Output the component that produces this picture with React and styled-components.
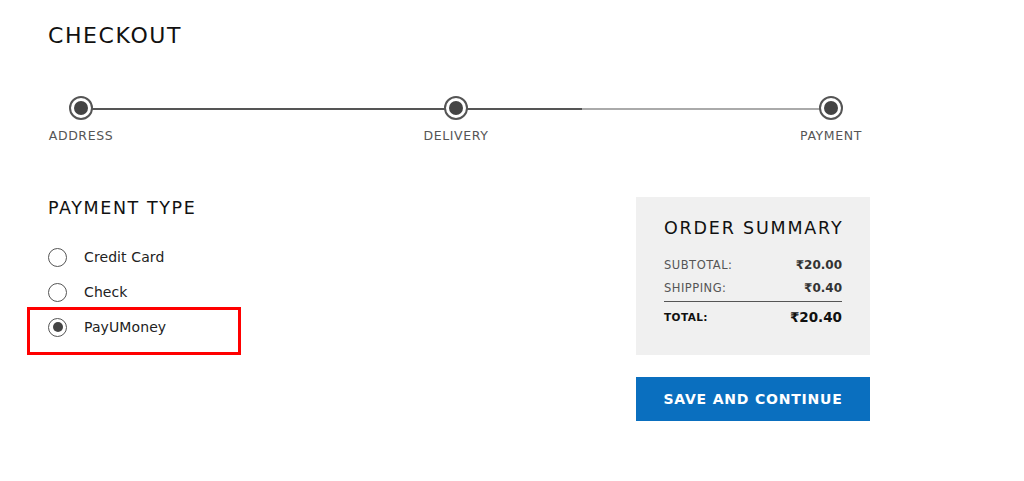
import React from 'react';
import styled, { createGlobalStyle } from 'styled-components';

const GlobalStyle = createGlobalStyle`
  body {
    margin: 0;
    background: #fff;
    font-family: "DejaVu Sans", "Noto Sans", sans-serif;
  }
`;

const Page = styled.div`
  width: 822px;
  padding: 22px 0 0 48px;
`;

const Title = styled.h1`
  margin: 0;
  font-size: 22px;
  font-weight: 400;
  letter-spacing: 1.6px;
  color: #111;
  line-height: 28px;
`;

const Stepper = styled.div`
  position: relative;
  width: 816px;
  margin-top: 46px;
  display: flex;
  justify-content: space-between;
`;

const Track = styled.div`
  position: absolute;
  top: 12px;
  left: 33px;
  right: 33px;
  height: 2px;
  background: linear-gradient(to right, #555 0%, #555 66.8%, #aaa 66.8%, #aaa 100%);
`;

const Step = styled.div`
  position: relative;
  width: 66px;
  display: flex;
  flex-direction: column;
  align-items: center;
`;

const StepDot = styled.div`
  width: 20px;
  height: 20px;
  border: 2px solid #555;
  border-radius: 50%;
  background: #fff;
  display: flex;
  align-items: center;
  justify-content: center;

  &::after {
    content: '';
    width: 14px;
    height: 14px;
    border-radius: 50%;
    background: #444;
  }
`;

const StepLabel = styled.div`
  margin-top: 8px;
  font-size: 12.5px;
  color: #555;
  white-space: nowrap;
  letter-spacing: 0.6px;
`;

const Main = styled.div`
  display: flex;
  justify-content: space-between;
  margin-top: 54px;
`;

const PaymentSection = styled.div``;

const SectionTitle = styled.h2`
  margin: 0 0 28px;
  font-size: 17.5px;
  font-weight: 400;
  letter-spacing: 1.6px;
  color: #111;
  line-height: 22px;
`;

const Options = styled.div`
  display: flex;
  flex-direction: column;
  gap: 15px;
`;

const Option = styled.label`
  position: relative;
  display: flex;
  align-items: center;
  gap: 17px;
  height: 20px;
  font-size: 14px;
  color: #222;
  letter-spacing: 0.1px;
`;

const Radio = styled.span`
  box-sizing: border-box;
  width: 19px;
  height: 19px;
  border: 1.5px solid #555;
  border-radius: 50%;
  display: flex;
  align-items: center;
  justify-content: center;

  &::after {
    content: '';
    width: 10px;
    height: 10px;
    border-radius: 50%;
    background: ${(p) => (p.checked ? '#444' : 'transparent')};
  }
`;

const Highlight = styled.span`
  position: absolute;
  box-sizing: border-box;
  left: -21px;
  top: -10px;
  width: 214px;
  height: 48px;
  border: 3px solid #f00;
  pointer-events: none;
`;

const SummaryColumn = styled.div`
  width: 234px;
  display: flex;
  flex-direction: column;
  gap: 22px;
`;

const SummaryBox = styled.div`
  background: #f0f0f0;
  padding: 20px 28px 27px;
`;

const SummaryTitle = styled.h3`
  margin: 0 0 14px;
  font-size: 17.5px;
  font-weight: 400;
  letter-spacing: 1.8px;
  color: #111;
  line-height: 22px;
  white-space: nowrap;
`;

const Row = styled.div`
  display: flex;
  justify-content: space-between;
  align-items: center;
  height: 23px;
  font-size: ${(p) => (p.total ? '10.5px' : '11.5px')};
  letter-spacing: ${(p) => (p.total ? '0.4px' : '0.5px')};
  color: ${(p) => (p.total ? '#111' : '#555')};
  font-weight: ${(p) => (p.total ? 700 : 400)};
`;

const Amount = styled.span`
  font-weight: 700;
  letter-spacing: 0;
  color: ${(p) => (p.total ? '#111' : '#333')};
  font-size: ${(p) => (p.total ? '13.5px' : '12px')};
`;

const Divider = styled.div`
  height: 1px;
  background: #555;
  margin: 2px 0 3px;
`;

const SaveButton = styled.button`
  height: 44px;
  border: none;
  background: #0a6fbf;
  color: #fff;
  font-family: inherit;
  font-size: 14px;
  font-weight: 700;
  letter-spacing: 0.8px;
  cursor: pointer;
`;

const steps = ['ADDRESS', 'DELIVERY', 'PAYMENT'];
const options = [
  { label: 'Credit Card' },
  { label: 'Check' },
  { label: 'PayUMoney', checked: true },
];

export default function App() {
  return (
    <Page>
      <GlobalStyle />
      <Title>CHECKOUT</Title>
      <Stepper>
        <Track />
        {steps.map((s) => (
          <Step key={s}>
            <StepDot />
            <StepLabel>{s}</StepLabel>
          </Step>
        ))}
      </Stepper>
      <Main>
        <PaymentSection>
          <SectionTitle>PAYMENT TYPE</SectionTitle>
          <Options>
            {options.map((o) => (
              <Option key={o.label}>
                <Radio checked={o.checked} />
                {o.label}
                {o.checked && <Highlight />}
              </Option>
            ))}
          </Options>
        </PaymentSection>
        <SummaryColumn>
          <SummaryBox>
            <SummaryTitle>ORDER SUMMARY</SummaryTitle>
            <Row>
              SUBTOTAL:
              <Amount>₹20.00</Amount>
            </Row>
            <Row>
              SHIPPING:
              <Amount>₹0.40</Amount>
            </Row>
            <Divider />
            <Row total>
              TOTAL:
              <Amount total>₹20.40</Amount>
            </Row>
          </SummaryBox>
          <SaveButton>SAVE AND CONTINUE</SaveButton>
        </SummaryColumn>
      </Main>
    </Page>
  );
}
